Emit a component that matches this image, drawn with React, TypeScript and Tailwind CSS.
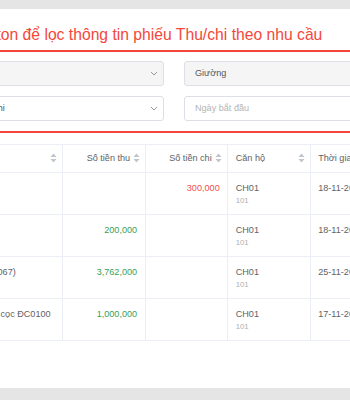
import React from "react";

type Row = {
  desc: string;
  thu: string;
  chi: string;
  apt: string;
  room: string;
  date: string;
};

const ROWS: Row[] = [
  { desc: "Chi phí", thu: "", chi: "300,000", apt: "CH01", room: "101", date: "18-11-2021" },
  { desc: "Thu tiền", thu: "200,000", chi: "", apt: "CH01", room: "101", date: "18-11-2021" },
  { desc: "Thu phí (P0067)", thu: "3,762,000", chi: "", apt: "CH01", room: "101", date: "25-11-2021" },
  { desc: "Thu tiền đặt cọc ĐC0100", thu: "1,000,000", chi: "", apt: "CH01", room: "101", date: "17-11-2021" },
];

function SortIcon() {
  return (
    <svg width="7" height="10" viewBox="0 0 7 10" className="shrink-0">
      <path d="M3.5 0.5 L6.5 4 L0.5 4 Z" fill="#c0c4cc" />
      <path d="M3.5 9.5 L6.5 6 L0.5 6 Z" fill="#c0c4cc" />
    </svg>
  );
}

function Chevron() {
  return (
    <svg width="8" height="5" viewBox="0 0 8 5" className="shrink-0">
      <path d="M1 1 L4 4 L7 1" fill="none" stroke="#9a9a9a" strokeWidth="1" />
    </svg>
  );
}

function SelectBox({ value, disabled }: { value: string; disabled?: boolean }) {
  return (
    <div
      className={[
        "flex h-[25px] items-center justify-between rounded-[3px] border border-[#dcdfe6] pl-[10px] pr-[5px]",
        disabled ? "bg-[#f5f5f5]" : "bg-white",
      ].join(" ")}
    >
      <span className="text-[9.1px] text-[#555]">{value}</span>
      <Chevron />
    </div>
  );
}

function InputBox({ value, placeholder, disabled }: { value?: string; placeholder?: string; disabled?: boolean }) {
  return (
    <div
      className={[
        "flex h-[25px] items-center rounded-[3px] border border-[#dcdfe6] px-[10px]",
        disabled ? "bg-[#f5f5f5]" : "bg-white",
      ].join(" ")}
    >
      {value ? (
        <span className="text-[9.1px] text-[#555]">{value}</span>
      ) : (
        <span className="text-[9.1px] text-[#b4b4b4]">{placeholder}</span>
      )}
    </div>
  );
}

export default function App() {
  return (
    <div className="h-[400px] w-[350px] overflow-hidden bg-[#e5e5e5] pt-[9px] font-['Liberation_Sans',Arial,Helvetica,sans-serif]">
      <div className="h-[379px] bg-white">
        <div className="-ml-[120px] w-[560px]">
          {/* title */}
          <div className="border-b-2 border-[#f4473a] pb-[5px] pl-[24px] pt-[16px]">
            <h2 className="whitespace-nowrap text-[15.7px] leading-[20px] text-[#f4473a]">
              Chọn các button để lọc thông tin phiếu Thu/chi theo nhu cầu
            </h2>
          </div>

          {/* filters */}
          <div className="border-b-2 border-[#f4473a] pb-[10px] pl-[84px] pt-[9px]">
            <div className="grid grid-cols-[200px_196px] gap-x-[20px] gap-y-[10px]">
              <SelectBox value="" disabled />
              <InputBox value="Giường" disabled />
              <SelectBox value="Thu/chi" />
              <InputBox placeholder="Ngày bắt đầu" />
            </div>
          </div>

          {/* table */}
          <table className="ml-[58px] mt-[11px] table-fixed border-collapse text-[9.1px] text-[#606266]">
            <colgroup>
              <col className="w-[125px]" />
              <col className="w-[83px]" />
              <col className="w-[82px]" />
              <col className="w-[84px]" />
              <col className="w-[130px]" />
            </colgroup>
            <thead>
              <tr className="h-[28px] border-y border-[#ebeef5]">
                <th className="border-r border-[#ebeef5] p-0 font-normal">
                  <div className="flex items-center justify-between pl-[12px] pr-[5px]">
                    <span>Nội dung</span>
                    <SortIcon />
                  </div>
                </th>
                <th className="border-r border-[#ebeef5] p-0 font-normal">
                  <div className="flex items-center justify-end gap-[3px] pr-[5px]">
                    <span>Số tiền thu</span>
                    <SortIcon />
                  </div>
                </th>
                <th className="border-r border-[#ebeef5] p-0 font-normal">
                  <div className="flex items-center justify-end gap-[3px] pr-[5px]">
                    <span>Số tiền chi</span>
                    <SortIcon />
                  </div>
                </th>
                <th className="border-r border-[#ebeef5] p-0 font-normal">
                  <div className="flex items-center justify-between pl-[8px] pr-[5px]">
                    <span>Căn hộ</span>
                    <SortIcon />
                  </div>
                </th>
                <th className="p-0 text-left font-normal">
                  <div className="pl-[7px]">Thời gian</div>
                </th>
              </tr>
            </thead>
            <tbody>
              {ROWS.map((r, i) => (
                <tr key={i} className="h-[42px] border-b border-[#ebeef5]">
                  <td className="border-r border-[#ebeef5] pl-[12px] pr-[8px] pt-[8px] align-top leading-[14px] whitespace-nowrap">
                    {r.desc}
                  </td>
                  <td className="border-r border-[#ebeef5] pr-[8px] pt-[8px] text-right align-top leading-[14px] text-[#38a055]">
                    {r.thu}
                  </td>
                  <td className="border-r border-[#ebeef5] pr-[7px] pt-[8px] text-right align-top leading-[14px] text-[#f2504b]">
                    {r.chi}
                  </td>
                  <td className="border-r border-[#ebeef5] pl-[8px] pt-[8px] align-top leading-[14px]">
                    <div>{r.apt}</div>
                    <div className="text-[7.8px] leading-[12px] text-[#b0b0b0]">{r.room}</div>
                  </td>
                  <td className="pl-[7px] pt-[8px] align-top leading-[14px] whitespace-nowrap">{r.date}</td>
                </tr>
              ))}
            </tbody>
          </table>
        </div>
      </div>
    </div>
  );
}
